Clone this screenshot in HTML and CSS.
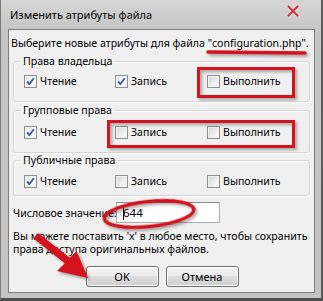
FILE: index.html
```html
<!DOCTYPE html>
<html lang="ru">
<head>
<meta charset="utf-8">
<title>Изменить атрибуты файла</title>
<link rel="stylesheet" href="styles.css">
</head>
<body>
<div class="window">
  <div class="titlebar">
    <span class="title">Изменить атрибуты файла</span>
    <svg class="close" width="12" height="12" viewBox="0 0 12 12" aria-hidden="true">
      <path d="M1.5 1.5 L10.5 10.5 M10.5 1.5 L1.5 10.5" stroke="#cf3b44" stroke-width="2.2" stroke-linecap="round" fill="none"/>
    </svg>
  </div>
  <div class="client">
    <p class="intro">Выберите новые атрибуты для файла <span class="fname">"configuration.php"</span>.</p>

    <fieldset class="group g1">
      <legend>Права владельца</legend>
      <div class="row">
        <label class="item"><span class="cb checked"><svg viewBox="0 0 11 11"><path d="M2.2 5.4 L4.3 8.3 L8.8 2.2" /></svg></span>Чтение</label>
        <label class="item"><span class="cb checked"><svg viewBox="0 0 11 11"><path d="M2.2 5.4 L4.3 8.3 L8.8 2.2" /></svg></span>Запись</label>
        <label class="item"><span class="cb"></span>Выполнить</label>
      </div>
    </fieldset>

    <fieldset class="group g2">
      <legend>Групповые права</legend>
      <div class="row">
        <label class="item"><span class="cb checked"><svg viewBox="0 0 11 11"><path d="M2.2 5.4 L4.3 8.3 L8.8 2.2" /></svg></span>Чтение</label>
        <label class="item"><span class="cb"></span>Запись</label>
        <label class="item"><span class="cb"></span>Выполнить</label>
      </div>
    </fieldset>

    <fieldset class="group g3">
      <legend>Публичные права</legend>
      <div class="row">
        <label class="item"><span class="cb checked"><svg viewBox="0 0 11 11"><path d="M2.2 5.4 L4.3 8.3 L8.8 2.2" /></svg></span>Чтение</label>
        <label class="item"><span class="cb"></span>Запись</label>
        <label class="item"><span class="cb"></span>Выполнить</label>
      </div>
    </fieldset>

    <div class="numeric">
      <span class="num-label">Числовое значение:</span>
      <div class="input"><span class="caret"></span>644</div>
    </div>

    <p class="hint">Вы можете поставить 'x' в любое место, чтобы сохранить<br>права доступа оригинальных файлов.</p>

    <div class="buttons">
      <button class="btn default">OK</button>
      <button class="btn">Отмена</button>
    </div>
  </div>
</div>

<svg class="annotations" width="323" height="301" viewBox="0 0 323 301" aria-hidden="true">
  <g class="marks" fill="none" stroke="#d6121c">
    <path d="M208 52 L305 53" stroke-width="3.5" stroke-linecap="round"/>
    <rect x="198.5" y="68.5" width="95" height="28" stroke-width="3"/>
    <rect x="108.5" y="121.5" width="185" height="25" stroke-width="3"/>
    <ellipse cx="149" cy="214" rx="45" ry="12.5" stroke-width="3.5" transform="rotate(-6 149 214)"/>
  </g>
  <g class="marks">
    <polygon fill="#d6121c" points="33.5,238.5 38,233 69.8,257.8 76.5,251 88,278 57,271 64.8,263.2"/>
  </g>
</svg>
</body>
</html>
```

FILE: styles.css
```css
html, body {
  margin: 0;
  padding: 0;
}

body {
  position: relative;
  width: 323px;
  height: 301px;
  overflow: hidden;
  background: #9a9a9a;
  font-family: "Noto Sans", "Open Sans", sans-serif;
  font-size: 10.6px;
  color: #000;
}

.window {
  box-sizing: border-box;
  width: 323px;
  height: 301px;
  display: flex;
  flex-direction: column;
  background: linear-gradient(#d6d6d6, #c6c6c6 28px, #c4c4c4);
  border-left: 1px solid #7c7c7c;
  border-right: 2px solid #5c5c5c;
  border-bottom: 3px solid #4e4e4e;
}

.titlebar {
  height: 29px;
  flex: none;
  display: flex;
  align-items: flex-start;
  justify-content: space-between;
}

.title {
  margin: 7px 0 0 9px;
  font-size: 11px;
  line-height: 16px;
}

.close {
  margin: 5px 22px 0 0;
  filter: drop-shadow(0 0 1px rgba(255, 255, 255, 0.8));
}

.client {
  flex: 1;
  margin: 0 6px 5px 7px;
  border: 1px solid #7d7d7d;
  background: #f0f0f0;
  display: flex;
  flex-direction: column;
}

.intro {
  margin: 6px 0 0 2px;
  line-height: 15px;
  white-space: nowrap;
}

.group {
  margin: 0 4px;
  padding: 0 0 0 10px;
  border: 1px solid #d5d5d5;
  border-radius: 3px;
  box-shadow: inset 1px 1px 0 #fff, 1px 1px 0 #fff;
}

.group legend {
  margin-left: -3px;
  padding: 0 2px;
  line-height: 14px;
}

.g1 { margin-top: 3px; padding-top: 6px; padding-bottom: 12px; }
.g2 { margin-top: 1px; padding-top: 8px; padding-bottom: 12px; }
.g3 { margin-top: 0; padding-top: 7px; padding-bottom: 6px; }

.row {
  display: grid;
  grid-template-columns: 91px 92px auto;
  height: 15px;
  align-items: center;
}

.item {
  display: flex;
  align-items: center;
  gap: 3px;
  line-height: 15px;
}

.cb {
  box-sizing: border-box;
  width: 13px;
  height: 13px;
  border: 1px solid #8e8f8f;
  background: linear-gradient(135deg, #d6d6d6, #f6f6f6 75%, #fff);
  box-shadow: inset 0 0 0 1px #f2f2f2;
  display: flex;
}

.cb.checked {
  background: linear-gradient(135deg, #e4e4e4, #fbfbfb 70%, #fff);
}

.cb svg {
  width: 11px;
  height: 11px;
}

.cb svg path {
  fill: none;
  stroke: #3e5d9c;
  stroke-width: 1.9;
  stroke-linejoin: round;
}

.numeric {
  margin: 6px 0 0 4px;
  display: grid;
  grid-template-columns: 103px 104px;
  align-items: center;
  white-space: nowrap;
}

.input {
  box-sizing: border-box;
  height: 21px;
  border: 1px solid #abadb3;
  border-top-color: #8a8c92;
  background: #fff;
  padding-left: 6px;
  display: flex;
  align-items: center;
  font-size: 11.5px;
}

.caret {
  width: 1px;
  height: 15px;
  background: #000;
  margin-right: -1px;
}

.hint {
  margin: 7px 0 0 4px;
  line-height: 13px;
  white-space: nowrap;
}

.buttons {
  margin-top: 10px;
  display: flex;
  justify-content: center;
  gap: 7px;
  padding-left: 1px;
}

.btn {
  box-sizing: border-box;
  width: 73px;
  height: 21px;
  padding: 0;
  border: 1px solid #707070;
  border-radius: 3px;
  background: linear-gradient(#f4f4f4, #ebebeb 50%, #dddddd 50%, #cfcfcf);
  box-shadow: inset 0 0 0 1px #fbfbfb;
  font-family: inherit;
  font-size: 11px;
  color: #000;
}

.annotations {
  position: absolute;
  left: 0;
  top: 0;
  pointer-events: none;
}

.marks {
  filter: drop-shadow(2px 2px 1.5px rgba(0, 0, 0, 0.35));
}
```
